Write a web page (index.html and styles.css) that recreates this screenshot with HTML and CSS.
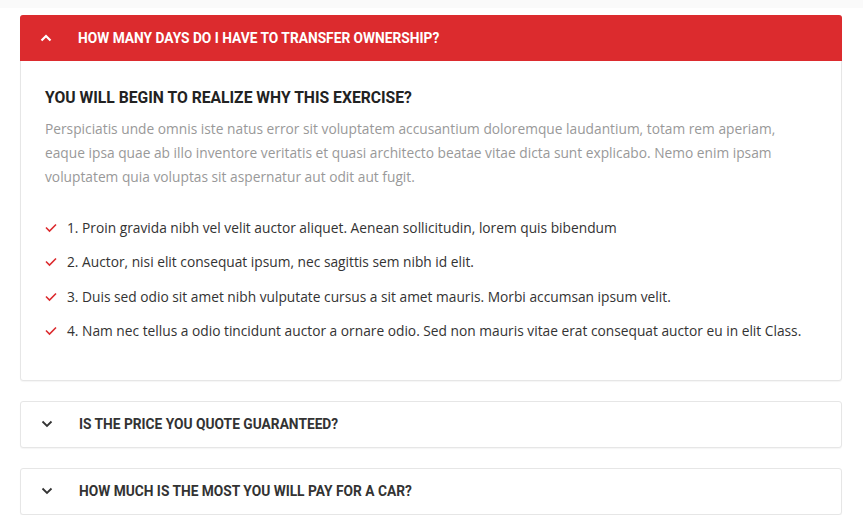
FILE: index.html
```html
<!DOCTYPE html>
<html>
<head>
<meta charset="utf-8">
<link rel="stylesheet" href="styles.css">
</head>
<body>
<div class="topband"></div>
<div class="faq">
  <div class="item open">
    <div class="head">
      <svg class="chev" width="12" height="8" viewBox="0 0 12 8"><path d="M1.5 6.5 L6 2 L10.5 6.5" fill="none" stroke="currentColor" stroke-width="2.2"/></svg>
      <span class="title">HOW MANY DAYS DO I HAVE TO TRANSFER OWNERSHIP?</span>
    </div>
    <div class="body">
      <h3>YOU WILL BEGIN TO REALIZE WHY THIS EXERCISE?</h3>
      <p>Perspiciatis unde omnis iste natus error sit voluptatem accusantium doloremque laudantium, totam rem aperiam, eaque ipsa quae ab illo inventore veritatis et quasi architecto beatae vitae dicta sunt explicabo. Nemo enim ipsam voluptatem quia voluptas sit aspernatur aut odit aut fugit.</p>
      <ul>
        <li><svg class="check" width="12" height="10" viewBox="0 0 12 10"><path d="M1 4.5 L4.5 8 L11 1.5" fill="none" stroke="currentColor" stroke-width="1.6"/></svg>1. Proin gravida nibh vel velit auctor aliquet. Aenean sollicitudin, lorem quis bibendum</li>
        <li><svg class="check" width="12" height="10" viewBox="0 0 12 10"><path d="M1 4.5 L4.5 8 L11 1.5" fill="none" stroke="currentColor" stroke-width="1.6"/></svg>2. Auctor, nisi elit consequat ipsum, nec sagittis sem nibh id elit.</li>
        <li><svg class="check" width="12" height="10" viewBox="0 0 12 10"><path d="M1 4.5 L4.5 8 L11 1.5" fill="none" stroke="currentColor" stroke-width="1.6"/></svg>3. Duis sed odio sit amet nibh vulputate cursus a sit amet mauris. Morbi accumsan ipsum velit.</li>
        <li><svg class="check" width="12" height="10" viewBox="0 0 12 10"><path d="M1 4.5 L4.5 8 L11 1.5" fill="none" stroke="currentColor" stroke-width="1.6"/></svg>4. Nam nec tellus a odio tincidunt auctor a ornare odio. Sed non mauris vitae erat consequat auctor eu in elit Class.</li>
      </ul>
    </div>
  </div>
  <div class="item">
    <div class="head">
      <svg class="chev" width="12" height="8" viewBox="0 0 12 8"><path d="M1.5 1.5 L6 6 L10.5 1.5" fill="none" stroke="currentColor" stroke-width="1.8"/></svg>
      <span class="title">IS THE PRICE YOU QUOTE GUARANTEED?</span>
    </div>
  </div>
  <div class="item">
    <div class="head">
      <svg class="chev" width="12" height="8" viewBox="0 0 12 8"><path d="M1.5 1.5 L6 6 L10.5 1.5" fill="none" stroke="currentColor" stroke-width="1.8"/></svg>
      <span class="title">HOW MUCH IS THE MOST YOU WILL PAY FOR A CAR?</span>
    </div>
  </div>
</div>
</body>
</html>
```
FILE: styles.css
```css
html, body {
  margin: 0;
  padding: 0;
  background: #fff;
}
.topband {
  height: 8px;
  background: #fafafa;
}
.faq {
  padding: 7px 21px 0 20px;
  display: flex;
  flex-direction: column;
  gap: 20px;
}
.item {
  border: 1px solid #e6e6e6;
  border-radius: 3px;
  box-shadow: 0 1px 1px rgba(0,0,0,0.04);
  background: #fff;
}
.head {
  height: 45px;
  display: flex;
  align-items: center;
  padding-left: 20px;
  color: #333;
}
.item.open .head {
  background: #dc2b2e;
  color: #fff;
  height: 46px;
  margin: -1px -1px 0 -1px;
  border-radius: 3px 3px 0 0;
}
.chev {
  width: 12px;
  height: 8px;
  margin-right: 26px;
}
.title {
  font-family: Roboto, "Liberation Sans", sans-serif;
  font-weight: 700;
  font-size: 13.75px;
}
.body {
  padding: 27px 24px 37px 24px;
}
h3 {
  margin: 0 0 9px 0;
  font-family: Roboto, "Liberation Sans", sans-serif;
  font-weight: 700;
  font-size: 15.7px;
  color: #222;
  line-height: 20px;
}
p {
  margin: 0 0 27px 0;
  font-family: "Open Sans", "Liberation Sans", sans-serif;
  font-size: 13.75px;
  line-height: 24px;
  color: #999;
}
ul {
  list-style: none;
  margin: 0;
  padding: 0;
}
li {
  display: flex;
  align-items: center;
  font-family: "Open Sans", "Liberation Sans", sans-serif;
  font-size: 13.75px;
  line-height: 24px;
  color: #333;
  margin-bottom: 10.3px;
}
li:last-child {
  margin-bottom: 0;
}
.check {
  color: #dc2b2e;
  margin-right: 10px;
  flex: none;
}
```
